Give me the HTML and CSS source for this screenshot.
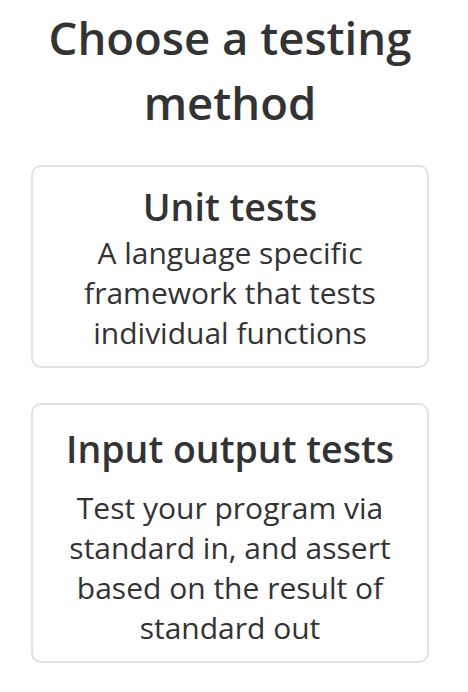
FILE: index.html
```html
<!DOCTYPE html>
<html lang="en">
<head>
<meta charset="utf-8">
<title>Choose a testing method</title>
<link rel="stylesheet" href="styles.css">
</head>
<body>
<main class="page">
  <h1 class="title">Choose a testing method</h1>
  <div class="options">
    <button class="card">
      <span class="card-title">Unit tests</span>
      <span class="card-desc">A language specific framework that tests individual functions</span>
    </button>
    <button class="card card-io">
      <span class="card-title">Input output tests</span>
      <span class="card-desc">Test your program via standard in, and assert based on the result of standard out</span>
    </button>
  </div>
</main>
</body>
</html>
```

FILE: styles.css
```css
html, body {
  margin: 0;
  padding: 0;
  background: #ffffff;
}

.page {
  font-family: "Open Sans", Roboto, sans-serif;
  color: #333333;
  padding: 5px 39px 0 31px;
  display: flex;
  flex-direction: column;
  align-items: stretch;
}

.title {
  margin: 0;
  font-size: 45.5px;
  font-weight: 600;
  line-height: 65px;
  text-align: center;
  color: #333333;
}

.options {
  margin-top: 30px;
  display: flex;
  flex-direction: column;
  gap: 35px;
}

.card {
  display: flex;
  flex-direction: column;
  align-items: center;
  margin: 0;
  background: #ffffff;
  border: 2px solid #e1e1e1;
  border-radius: 10px;
  padding: 16px 28px 13px;
  font-family: inherit;
  color: inherit;
  text-align: center;
  cursor: pointer;
}

.card-title {
  font-size: 37.5px;
  font-weight: 600;
  line-height: 48px;
}

.card-desc {
  margin-top: 2px;
  font-size: 30px;
  font-weight: 400;
  line-height: 40px;
}

.card-io {
  padding-top: 20px;
}

.card-io .card-desc {
  margin-top: 15px;
}
```
